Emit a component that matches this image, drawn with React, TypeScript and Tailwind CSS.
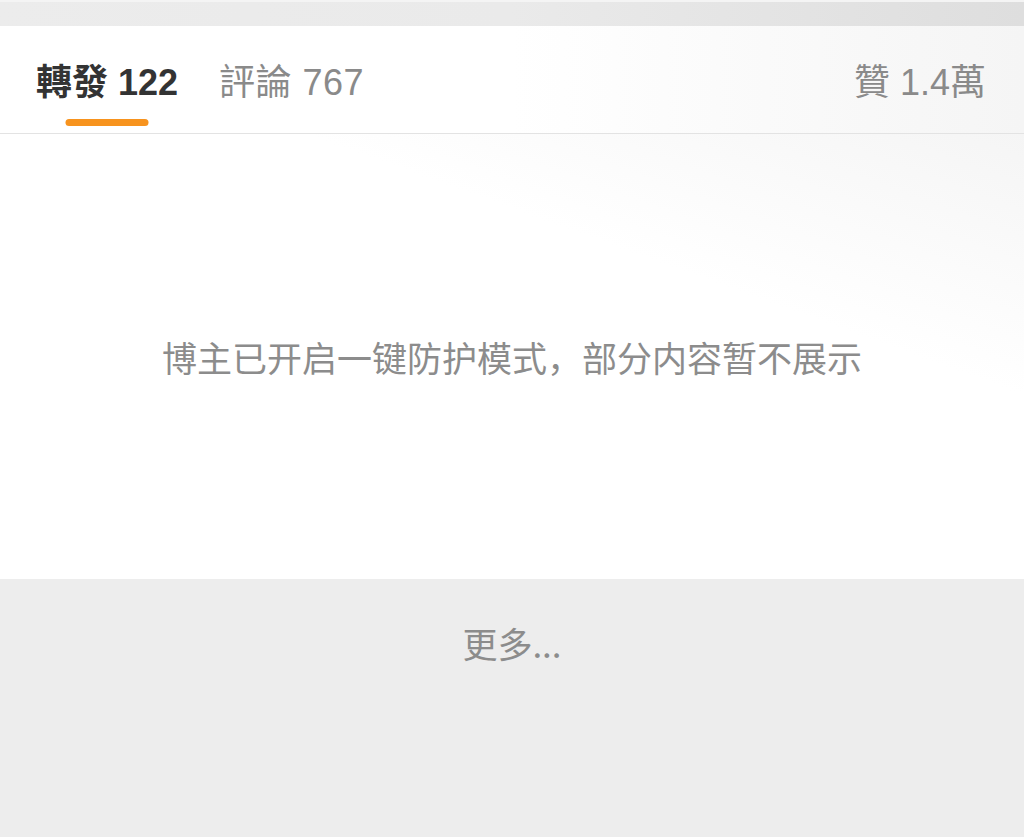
import React from "react";

export default function App() {
  const font = {
    fontFamily:
      '"Liberation Sans", "Noto Sans CJK TC", "Noto Sans CJK SC", sans-serif',
  };
  return (
    <div className="w-[1024px] h-[837px] flex flex-col bg-[#ededed] overflow-hidden" style={font}>
      <div className="h-[26px] shrink-0 border-t-2 border-[#f4f4f4] bg-gradient-to-r from-[#ececec] via-[#eaeaea] to-[#dedede]" />
      <div className="h-[108px] shrink-0 flex items-stretch justify-between px-[36px] border-b border-[#e3e3e3] bg-gradient-to-r from-white via-white to-[#f5f5f5]">
        <div className="flex gap-[41px]">
          <div className="relative flex items-center">
            <span className="text-[36px] font-bold text-[#333333] leading-none pt-[6px]">
              轉發 122
            </span>
            <div className="absolute left-1/2 -translate-x-1/2 bottom-[7px] w-[83px] h-[7px] rounded-full bg-[#f7931e]" />
          </div>
          <div className="flex items-center">
            <span className="text-[36px] text-[#8a8a8a] leading-none pt-[6px] tracking-[0.5px]">評論 767</span>
          </div>
        </div>
        <div className="flex items-center pr-[2px]">
          <span className="text-[36px] text-[#8a8a8a] leading-none pt-[6px]">贊 1.4萬</span>
        </div>
      </div>
      <div className="h-[445px] shrink-0 flex items-center justify-center bg-[linear-gradient(200deg,#f5f5f5_0%,#ffffff_32%,#ffffff_100%)]">
        <span className="text-[35px] text-[#8c8c8c] leading-none pb-[1px]" style={{ fontFamily: '"Noto Sans CJK SC", sans-serif' }}>
          博主已开启一键防护模式，部分内容暂不展示
        </span>
      </div>
      <div className="flex justify-center pt-[46px]">
        <span className="text-[35px] text-[#8c8c8c] leading-none" style={{ fontFamily: '"Noto Sans CJK SC", sans-serif' }}>
          更多...
        </span>
      </div>
    </div>
  );
}
